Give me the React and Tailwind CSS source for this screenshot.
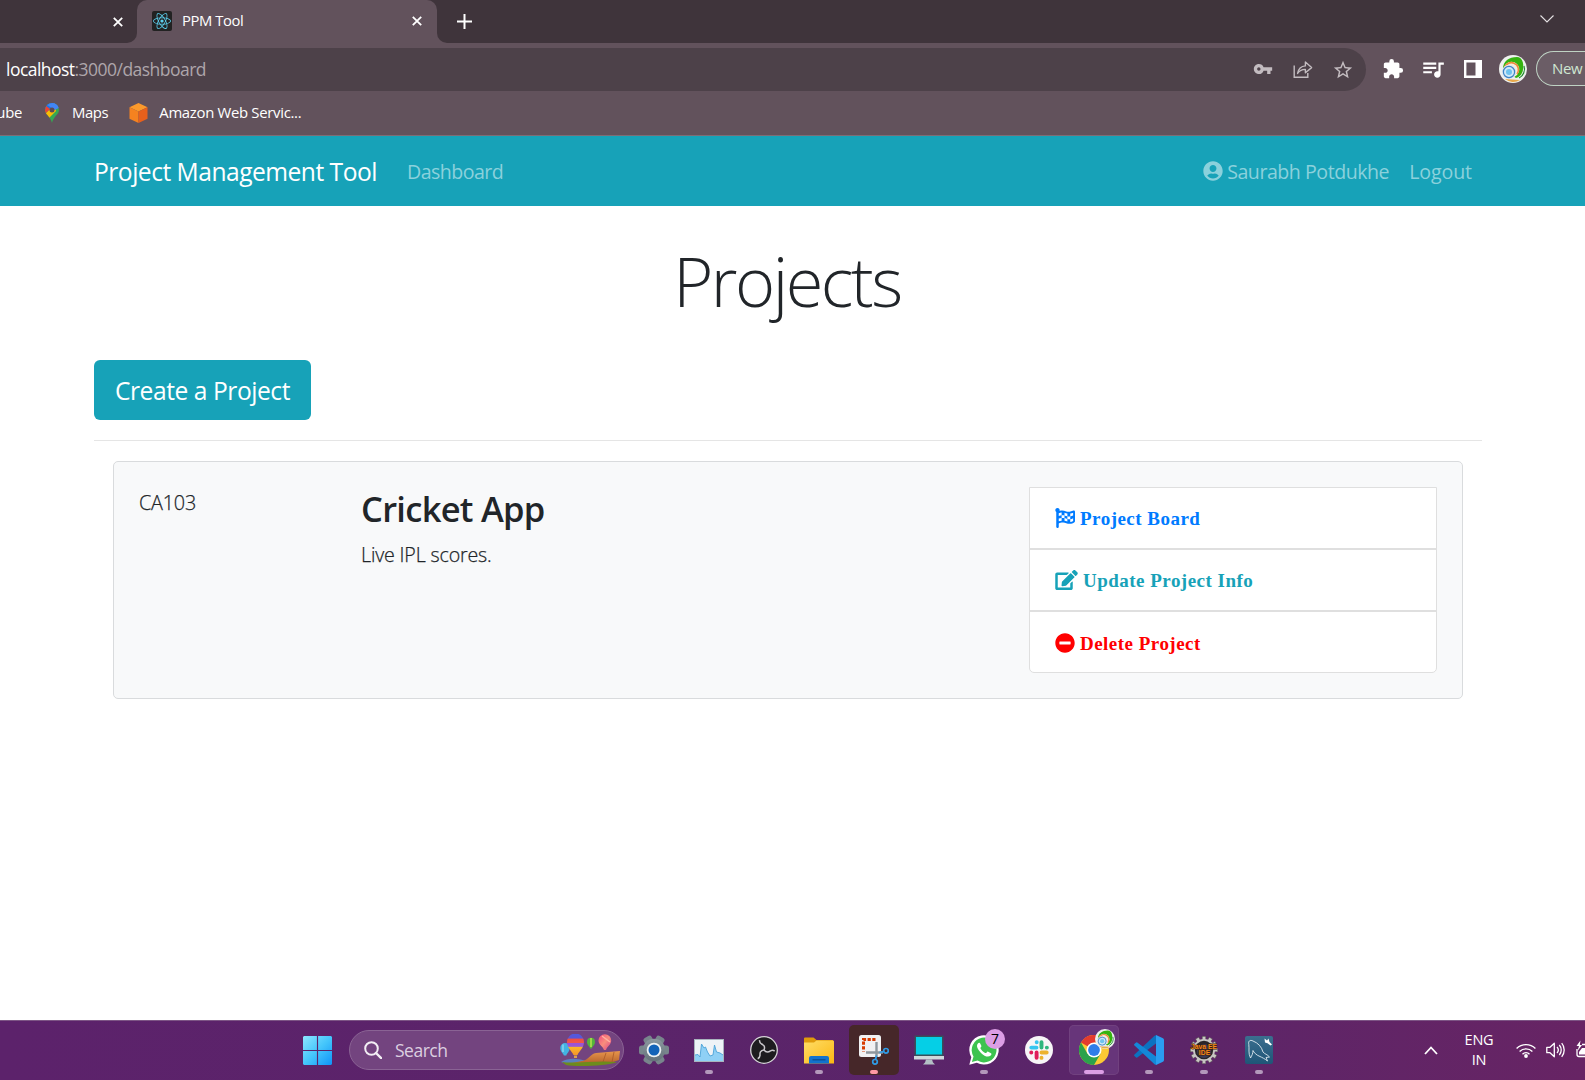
import React from "react";
import { FaUserCircle, FaEdit, FaMinusCircle, FaReact, FaFlagCheckered } from "react-icons/fa";
import { MdVpnKey, MdStarBorder, MdExtension, MdQueueMusic } from "react-icons/md";

const CloseIcon = ({ className }) => (
  <svg viewBox="0 0 10 10" className={className}>
    <path d="M0.8 0.8 9.2 9.2M9.2 0.8 0.8 9.2" stroke="#fff" strokeWidth="1.8" fill="none" />
  </svg>
);

const ShareIcon = () => (
  <svg viewBox="0 0 20 19" className="h-[19px] w-[20px]" fill="none" stroke="#c3bcc0" strokeWidth="1.4">
    <path d="M1.2 5.5V17.3H14.8V13" />
    <path d="M4.6 13.4C5.4 8.8 8.3 6.2 12.4 5.9V2L18.6 7.6 12.4 12.8V9.4C9 9.3 6.6 10.6 4.6 13.4Z" strokeLinejoin="round" />
  </svg>
);

const MapsIcon = () => (
  <svg viewBox="0 0 14 20" className="h-[20px] w-[14px]">
    <defs>
      <clipPath id="pin"><path d="M7 0A7 7 0 0 0 0 7C0 11.5 5.3 13 7 20 8.7 13 14 11.5 14 7A7 7 0 0 0 7 0Z" /></clipPath>
    </defs>
    <g clipPath="url(#pin)">
      <path d="M0 0H14V20H0Z" fill="#34a853" />
      <path d="M0 0H14V4L7 7Z" fill="#4285f4" />
      <path d="M1 2 7 0 9 3 4 9 0 5Z" fill="#1a73e8" />
      <path d="M0 11 9 2 11 8 3 16Z" fill="#fbbc04" />
      <path d="M0 2 5 6 0 11Z" fill="#ea4335" />
      <path d="M7 0H14V5L9.5 7 6 4.6 2.2 2Z" fill="#4285f4" />
    </g>
    <circle cx="7" cy="7" r="2.5" fill="#5d4a53" />
  </svg>
);

const CubeIcon = () => (
  <svg viewBox="0 0 18 20" className="h-[20px] w-[19px]">
    <path d="M9 0 18 4.3 9 8.6 0 4.3Z" fill="#fb9a2c" />
    <path d="M0 4.3 9 8.6V20L0 15.7Z" fill="#f58220" />
    <path d="M18 4.3 9 8.6V20L18 15.7Z" fill="#e8601c" />
  </svg>
);

const Avatar = ({ className }) => (
  <svg viewBox="0 0 28 28" className={className}>
    <circle cx="14" cy="14" r="14" fill="#eef1ee" />
    <path d="M6 24A13 13 0 0 0 21 25Z" fill="#e8a84a" />
    <path d="M4 14C4 6 10 2 18 2 23 2 25 8 24 14 24 18 21 22 17 23Z" fill="#35b310" />
    <path d="M20 23A10 10 0 0 0 25 11" stroke="#1c8a2a" strokeWidth="1.2" fill="none" />
    <circle cx="12.500" cy="14.500" r="7.800" fill="#f4efdf" />
    <path d="M5.500 14A7 7 0 1 1 18 19" stroke="#ef8a3a" strokeWidth="1.600" fill="none" />
    <circle cx="10" cy="17" r="7.200" fill="#dfe4ee" />
    <circle cx="10" cy="17" r="5.600" fill="#cfe9f8" stroke="#3c83c4" strokeWidth="1.200" />
    <circle cx="10" cy="17" r="3" fill="#6fc3ee" />
  </svg>
);

function BrowserChrome() {
  return (
    <header className="flex h-[136px] flex-col border-b border-[#7d6d76] bg-[#62525c] font-['Open_Sans',sans-serif] text-white">
      <div className="flex h-[43px]">
        <div className="flex w-[137px] items-center justify-end rounded-br-[10px] bg-[#3f343b] pr-[14px]">
          <CloseIcon className="size-[10px]" />
        </div>
        <div className="w-[300px] bg-[#3f343b]">
          <div className="flex h-[43px] items-center rounded-t-[10px] bg-[#62525c] pl-[15px] pr-[15px] pb-[1px]">
            <span className="flex size-5 items-center justify-center rounded-[2px] bg-[#222]">
              <FaReact className="size-[18px] text-[#5ccfee]" />
            </span>
            <span className="ml-[10px] flex-1 pb-[1px] text-[14.8px] tracking-[-0.4px]">PPM Tool</span>
            <CloseIcon className="size-[10px]" />
          </div>
        </div>
        <div className="flex flex-1 items-center justify-between rounded-bl-[10px] bg-[#3f343b] pl-[20px] pr-[31px]">
          <svg viewBox="0 0 15 15" className="size-[15px]"><path d="M7.5 0V15M0 7.5H15" stroke="#fff" strokeWidth="2" /></svg>
          <svg viewBox="0 0 14 8" className="mb-[6px] h-[8px] w-[14px]"><path d="M0.5 0.5 7 7 13.5 0.5" stroke="#e6e2e4" strokeWidth="1.1" fill="none" /></svg>
        </div>
      </div>
      <div className="mt-[5px] flex h-[43px] items-center">
        <div className="flex h-full w-[1366px] items-center rounded-r-full bg-[#4d4149] pl-[6px] pr-[12px] text-[#c3bcc0]">
          <span className="flex-1 text-[17.5px] leading-none tracking-[-0.53px] text-[#aea6ab]"><span className="text-white">localhost</span>:3000/dashboard</span>
          <MdVpnKey className="mb-[1px] mr-[20px] size-5" />
          <span className="mr-[19px]"><ShareIcon /></span>
          <MdStarBorder className="size-[22px]" />
        </div>
        <MdExtension className="mb-[2px] ml-[16px] size-[22px]" />
        <MdQueueMusic className="mb-[2px] ml-[16px] size-[26px]" />
        <svg viewBox="0 0 18 18" className="mb-[2px] ml-[18px] size-[18px]">
          <path d="M0 0H18V18H0ZM2.400 2.400V15.600H11.500V2.400Z" fill="#fff" fillRule="evenodd" />
        </svg>
        <Avatar className="mb-[2px] ml-[17px] size-[28px]" />
        <div className="mb-[2px] ml-[9px] h-[35px] flex-1 overflow-hidden rounded-l-full border-[1.5px] border-r-0 border-[#bfd3c4] bg-[#6b5d66] pl-[15px] text-[15px] leading-[32px] tracking-[-0.4px] text-[#cfe6d2]">New</div>
      </div>
      <div className="flex h-[44px] items-center pb-[2px] text-[14.9px] tracking-[-0.31px]">
        <span className="flex w-[22px] justify-end overflow-hidden">ube</span>
        <span className="ml-[23px] pt-[1px]"><MapsIcon /></span>
        <span className="ml-[13px] tracking-[-0.4px]">Maps</span>
        <span className="ml-[21px] pt-[1px]"><CubeIcon /></span>
        <span className="ml-[11px]">Amazon Web Servic...</span>
      </div>
    </header>
  );
}

function Navbar() {
  return (
    <nav className="flex h-[70px] items-center bg-[#17a2b8] pl-[94px] pr-[103px] pt-[2px] font-['Open_Sans',sans-serif] text-[19.6px] text-[#8bd1dc]">
      <span className="text-[24.6px] tracking-[-0.5px] text-white">Project Management Tool</span>
      <span className="ml-[30px] tracking-[-0.53px]">Dashboard</span>
      <span className="ml-auto flex items-center tracking-[-0.47px]"><FaUserCircle className="mb-[2px] mr-[4px] size-5" />Saurabh Potdukhe</span>
      <span className="ml-[20px] mr-[10px] tracking-[-0.1px]">Logout</span>
    </nav>
  );
}

const actions = [
  { label: "Project Board", Icon: FaFlagCheckered, color: "text-[#007bff]", icon: "w-[20px] h-[20px] mr-[5px] mb-[3px]" },
  { label: "Update Project Info", Icon: FaEdit, color: "text-[#17a2b8]", icon: "w-[23px] h-[20px] mr-[5px] mb-[3px]" },
  { label: "Delete Project", Icon: FaMinusCircle, color: "text-[#ff0000]", icon: "w-[20px] h-[20px] mr-[5px] mb-[3px]" },
];

function Dashboard() {
  return (
    <main className="h-[814px] bg-white pl-[94px] pr-[103px] font-['Open_Sans',sans-serif] text-[#212529]">
      <h1 className="pt-[33px] text-center text-[68.5px] font-light leading-[84px] tracking-[-2.5px]"><span className="mr-[2px]">Projects</span></h1>
      <button className="mt-[37px] flex h-[60px] w-[217px] items-center justify-center rounded-[6px] bg-[#17a2b8] pt-[2px] text-[24.6px] tracking-[-0.45px] text-white">Create a Project</button>
      <hr className="mt-[20px] border-t border-[#e5e5e5]" />
      <section className="ml-[19px] mr-[19px] mt-[20px] flex h-[238px] rounded-[5px] border border-[#d9dbdd] bg-[#f8f9fa] p-[25px]">
        <span className="w-[222px] pt-[1px] text-[19.8px] font-light leading-[30px] tracking-[-0.2px] [-webkit-text-stroke:0.25px_#212529]">CA103</span>
        <div className="w-[668px]">
          <h3 className="pt-[1px] text-[34.5px] font-semibold leading-[42px] tracking-[-0.72px]">Cricket App</h3>
          <p className="mt-[10px] text-[19.6px] font-light leading-[30px] tracking-[-0.15px] [-webkit-text-stroke:0.25px_#212529]">Live IPL scores.</p>
        </div>
        <ul className="h-[186px] w-[408px] overflow-hidden rounded-b-[5px] border border-[#dfdfdf] bg-white">
          {actions.map(({ label, Icon, color, icon }) => (
            <li key={label} className={`flex h-[62px] items-center border-b-2 border-[#dfdfdf] pl-[25px] pt-[3px] font-['Liberation_Serif',serif] text-[19px] font-bold tracking-[0.48px] last:border-b-0 last:pt-[2px] ${color}`}>
              <Icon className={icon} />
              {label}
            </li>
          ))}
        </ul>
      </section>
    </main>
  );
}

const WindowsLogo = () => (
  <svg viewBox="0 0 30 30" className="size-[29px]">
    <defs><linearGradient id="win" x1="0" y1="0" x2="1" y2="1"><stop offset="0" stopColor="#8ee6ff" /><stop offset="0.5" stopColor="#45c6fb" /><stop offset="1" stopColor="#0f93f8" /></linearGradient></defs>
    <path d="M1 0H14.4V14.4H0V1ZM15.6 0H29L30 1V14.4H15.6ZM0 15.6H14.4V30H1L0 29ZM15.6 15.6H30V29L29 30H15.6Z" fill="url(#win)" />
  </svg>
);

const Balloons = () => (
  <svg viewBox="0 0 60 32" className="h-[32px] w-[60px]">
    <defs>
      <linearGradient id="b1" x1="0" y1="0" x2="0" y2="1"><stop offset="0" stopColor="#4d5be0" /><stop offset="0.22" stopColor="#5a55d8" /><stop offset="0.25" stopColor="#ef4e43" /><stop offset="0.42" stopColor="#f0564a" /><stop offset="0.45" stopColor="#9b51d8" /><stop offset="0.6" stopColor="#9a5ad2" /><stop offset="0.63" stopColor="#fbb829" /><stop offset="1" stopColor="#f3952b" /></linearGradient>
      <linearGradient id="b2" x1="0" y1="0" x2="1" y2="1"><stop offset="0" stopColor="#f2487f" /><stop offset="0.5" stopColor="#f88e7c" /><stop offset="1" stopColor="#d9438b" /></linearGradient>
      <linearGradient id="hill" x1="0" y1="0" x2="0" y2="1"><stop offset="0" stopColor="#e8964c" /><stop offset="1" stopColor="#b8642c" /></linearGradient>
    </defs>
    <path d="M1 28C8 24 16 24 26 27L40 29H4Z" fill="#5b7fc0" />
    <path d="M22 27C29 26 30 20 36 19L60 17 59 26 50 29H12Z" fill="url(#hill)" />
    <path d="M54 18 52 28M46 19 43 28" stroke="#a8582a" strokeWidth="0.8" />
    <path d="M2 28C16 30 38 26 57 28 48 32 16 33 6 31Z" fill="#6d8b1c" />
    <path d="M0.300 14A4.700 5 0 0 1 9.700 14C9.700 17.500 7 19 6.300 21.500H3.900C3 19 0.300 17.500 0.300 14Z" fill="#43b4e2" />
    <path d="M3 10.500V18" stroke="#9ddcf2" strokeWidth="1.200" />
    <path d="M7 8A8.500 8.500 0 0 1 24 8C24 14 19 17 17.500 21H13.500C12 17 7 14 7 8Z" fill="url(#b1)" />
    <path d="M14 21.500H17V24H14Z" fill="#d9a04c" />
    <path d="M27 8A4 4.200 0 0 1 35 8C35 11 32.500 12 31.800 14.500H30.200C29.500 12 27 11 27 8Z" fill="#54b53a" />
    <path d="M31 4V13" stroke="#b8e34f" strokeWidth="1.500" />
    <path d="M38.500 6.500A6.300 6.300 0 0 1 51.200 6.500C51.200 11 47 12 46 16H44C43 12 38.500 11 38.500 6.500Z" fill="url(#b2)" />
    <path d="M42 2 50 8" stroke="#ffb3a0" strokeWidth="1.500" />
  </svg>
);

const GearIcon = () => (
  <svg viewBox="0 0 30 30" className="size-[30px]">
    <defs><linearGradient id="gear" x1="0" y1="0" x2="0" y2="1"><stop offset="0" stopColor="#8b989f" /><stop offset="1" stopColor="#65727a" /></linearGradient></defs>
    {[0, 60, 120].map((a) => <rect key={a} x="0" y="10.500" width="30" height="9" rx="2.500" transform={`rotate(${a} 15 15)`} fill="#78858c" />)}
    <circle cx="15" cy="15" r="11.200" fill="url(#gear)" />
    <circle cx="15" cy="15" r="7.300" fill="#eef2f4" />
    <circle cx="15" cy="15" r="5.500" fill="#1363b8" />
  </svg>
);

const MonitorChart = () => (
  <svg viewBox="0 0 30 23" className="h-[23px] w-[30px]">
    <rect x="0.500" y="0.500" width="29" height="22" fill="#eef3f7" stroke="#a9b4bd" />
    <path d="M1 16 4 15.500 6 18 7.500 5 10 9 11.500 8 13.500 13 16 17 19 16 20.500 6 22.500 13 26 14 29 16V22H1Z" fill="#8fd0f5" />
    <path d="M1 16 4 15.500 6 18 7.500 5 10 9 11.500 8 13.500 13 16 17 19 16 20.500 6 22.500 13 26 14 29 16" fill="none" stroke="#4ba3d8" strokeWidth="0.900" />
  </svg>
);

const ObsIcon = () => (
  <svg viewBox="0 0 28 28" className="size-[28px]">
    <circle cx="14" cy="14" r="13.300" fill="#1d1c1f" stroke="#d6d4d8" strokeWidth="1.300" />
    {[0, 120, 240].map((a) => (
      <path key={a} transform={`rotate(${a} 14 14)`} d="M14 14C15.500 10.500 13.500 8.800 11.500 8 10 7 9.400 5.800 9.600 4.200" fill="none" stroke="#c9c7cb" strokeWidth="1.500" />
    ))}
  </svg>
);

const FolderIcon = () => (
  <svg viewBox="0 0 30 27" className="h-[27px] w-[30px]">
    <defs><linearGradient id="fold" x1="0" y1="0" x2="1" y2="1"><stop offset="0" stopColor="#ffdd66" /><stop offset="1" stopColor="#fbb813" /></linearGradient></defs>
    <path d="M0 1.500Q0 0.500 1 0.500H9.500L12.500 3H29V8H0Z" fill="#e09b0b" />
    <path d="M0 5.500H10L12.500 3.500H29Q30 3.500 30 4.500V26.500H0Z" fill="url(#fold)" />
    <path d="M5 26.500V21Q5 19 7 19H23Q25 19 25 21V26.500Z" fill="#1273cc" />
    <path d="M8.500 22.800H21.500" stroke="#0b4a8c" strokeWidth="1.200" />
  </svg>
);

const SnipIcon = () => (
  <svg viewBox="0 0 30 30" className="size-[30px]">
    <rect x="0" y="0" width="22" height="22" rx="2.500" fill="#f1f1f3" />
    <path d="M16.500 4.500H4.500V16.500" fill="none" stroke="#d83b01" strokeWidth="3" strokeDasharray="3.200 1.500" />
    <path d="M17.500 7V22M7 17.500H24" stroke="#8e979e" strokeWidth="2.400" />
    <circle cx="27" cy="15.800" r="2.300" fill="none" stroke="#2f9be6" strokeWidth="1.700" />
    <circle cx="16" cy="26.800" r="2.300" fill="none" stroke="#2f9be6" strokeWidth="1.700" />
    <path d="M17.500 20.500 16.500 24.500M20.500 17.500 24.500 16.500" stroke="#2f9be6" strokeWidth="1.800" />
  </svg>
);

const MonitorIcon = () => (
  <svg viewBox="0 0 30 30" className="size-[30px]">
    <path d="M0.500 0.500H29.500V21H0.500Z" fill="#37505b" />
    <path d="M2 2H28V19.500H2Z" fill="#05cfe6" />
    <path d="M0 21H30V24.500H0Z" fill="#cfd8dc" />
    <path d="M12 24.500H18L19 27.500 21 29.500H9L11 27.500Z" fill="#b3bfc5" />
  </svg>
);

const WhatsAppIcon = () => (
  <svg viewBox="0 0 30 30" className="size-[30px]">
    <path d="M0.300 29.700 2.300 22.300A14.700 14.700 0 1 1 7.800 27.700Z" fill="#fff" />
    <path d="M2.900 27.100 4.500 21.500A12.400 12.400 0 1 1 8.600 25.600Z" fill="#3dc34f" />
    <path d="M11.200 8.500C10.600 7.400 9.500 7.900 8.900 8.600 6.800 11.200 8.700 14.500 12 17.900 15.400 21.300 19.300 22.800 21.700 20.500 22.700 19.500 22.600 18.600 22 18.200L19.200 16.700C18.600 16.400 18.200 16.700 17.800 17.200 17.200 18 16.900 18.300 16.100 17.900 14 16.900 12.500 15.300 11.500 13.500 11.100 12.800 11.700 12.400 12.200 11.700 12.500 11.200 12.400 10.900 12.200 10.400Z" fill="#fff" />
  </svg>
);

const SlackIcon = () => (
  <svg viewBox="0 0 28 28" className="size-[28px]">
    <circle cx="14" cy="14" r="14" fill="#f7f5f7" />
    <g strokeWidth="3.900" strokeLinecap="round">
      <path d="M6.300 11.600H11.500M11.700 6.100V6.200" stroke="#36c5f0" />
      <path d="M16.500 6.300V11.500M21.800 11.600H21.900" stroke="#2eb67d" />
      <path d="M21.700 16.500H16.500M16.500 21.800V21.900" stroke="#ecb22e" />
      <path d="M11.600 21.700V16.500M6.200 16.500H6.300" stroke="#e01e5a" />
    </g>
  </svg>
);

const ChromeIcon = () => (
  <svg viewBox="0 0 30 30" className="size-[30px]">
    <circle cx="15" cy="15" r="15" fill="#fcc934" />
    <path d="M15 15 2 7.500A15 15 0 0 1 28 7.500H15Z" fill="#e33b2e" />
    <path d="M2 7.500A15 15 0 0 0 15 30L21.500 18.800 15 15 8.500 18.800Z" fill="#2ba24c" />
    <circle cx="15" cy="15" r="7.500" fill="#fff" />
    <circle cx="15" cy="15" r="5.900" fill="#2f7de9" />
  </svg>
);

const VsCodeIcon = () => (
  <svg viewBox="0 0 30 30" className="size-[30px]">
    <path d="M22.300 0.200V8.200L3.300 22.400Q2.500 23 1.800 22.300L0.400 21Q-0.300 20.200 0.500 19.500L20.500 0.800Q21.500 0 22.300 0.200Z" fill="#0b72c0" />
    <path d="M22.300 29.800V21.800L3.300 7.600Q2.500 7 1.800 7.700L0.400 9Q-0.300 9.800 0.500 10.500L20.500 29.200Q21.500 30 22.300 29.800Z" fill="#1488d8" />
    <path d="M22 0 29 3.200Q30 3.800 30 5V25Q30 26.200 29 26.800L22 30Z" fill="#2a9df0" />
  </svg>
);

const JavaEeIcon = () => (
  <svg viewBox="0 0 28 28" className="size-[28px] overflow-visible">
    {[0, 30, 60, 90, 120, 150].map((a) => <rect key={a} x="0.300" y="12.200" width="27.400" height="3.600" transform={`rotate(${a} 14 14)`} fill="#c9c6c4" stroke="#55504e" strokeWidth="0.500" />)}
    <circle cx="14" cy="14" r="11" fill="#c9c6c4" />
    <circle cx="14" cy="14" r="9.200" fill="#2a2528" />
    <circle cx="14" cy="15" r="7" fill="#3d3c57" />
    <g fontFamily="Liberation Sans" fontWeight="700" fontSize="6.800" fill="#f58a1f" stroke="#3a1c08" strokeWidth="1" paintOrder="stroke" textAnchor="middle">
      <text x="14" y="13.200">Java EE</text>
      <text x="14.500" y="19.300">IDE</text>
    </g>
  </svg>
);

const MySqlIcon = () => (
  <svg viewBox="0 0 28 28" className="size-[28px]">
    <defs><linearGradient id="sql" x1="0" y1="0" x2="0" y2="1"><stop offset="0" stopColor="#3b6f8f" /><stop offset="1" stopColor="#1f5577" /></linearGradient></defs>
    <rect width="28" height="28" rx="2" fill="url(#sql)" />
    <path d="M5.500 22C3 17 4.500 13 3.800 8.500 3 5 5 3.500 8 5 13 7 16.500 10.500 18 16 19.500 18 22.500 18.500 24.500 21L21 21.500 22.500 25C19.500 22.500 17 21.500 15 20.500 11 19 9 16.500 8 14.500 8 17 7 19.500 5.500 22Z" fill="none" stroke="#dfeaf1" strokeWidth="0.900" />
    <path d="M19.500 2.500 22 4.500 23.500 2.500 24.500 6 27 8.500 25.500 9.500 22.500 7.200 20 6.500Z" fill="#fff" />
  </svg>
);

const apps = [
  { id: "settings", Icon: GearIcon },
  { id: "monitor", Icon: MonitorChart, bar: "w-2 bg-[#b398bb]" },
  { id: "obs", Icon: ObsIcon },
  { id: "files", Icon: FolderIcon, bar: "w-2 bg-[#b398bb]" },
  { id: "snip", Icon: SnipIcon, bar: "w-2 bg-[#ff99a4]", cell: "bg-[#462729]" },
  { id: "pc", Icon: MonitorIcon },
  { id: "whatsapp", Icon: WhatsAppIcon, bar: "w-2 bg-[#b398bb]", badge: true },
  { id: "slack", Icon: SlackIcon },
  { id: "chrome", Icon: ChromeIcon, bar: "w-5 bg-[#dc9ee5]", cell: "bg-[#67357a] shadow-[inset_0_0_0_1px_#71417f]", profile: true },
  { id: "vscode", Icon: VsCodeIcon, bar: "w-2 bg-[#b398bb]" },
  { id: "java", Icon: JavaEeIcon, bar: "w-2 bg-[#b398bb]" },
  { id: "mysql", Icon: MySqlIcon, bar: "w-2 bg-[#b398bb]" },
];

function Taskbar() {
  return (
    <footer className="flex h-[60px] items-center overflow-hidden border-t border-[#7d5585] bg-gradient-to-r from-[#5c226b] via-[#5a2569] via-70% to-[#672464] pb-[1px] pl-[292px] font-['Open_Sans',sans-serif] text-white">
      <div className="flex w-[50px] justify-center"><WindowsLogo /></div>
      <div className="ml-[7px] flex h-[40px] w-[275px] shrink-0 items-center rounded-full border border-[#8a6394] bg-[#73447f] pl-[14px] pr-[3px]">
        <svg viewBox="0 0 18 18" className="size-[18px]" fill="none" stroke="#f3eef4" strokeWidth="2"><circle cx="7.500" cy="7.500" r="6.300" /><path d="M12 12 17.300 17.300" strokeWidth="2.400" strokeLinecap="round" /></svg>
        <span className="ml-[13px] flex-1 text-[17.5px] tracking-[-0.5px] text-[#dccfe0]">Search</span>
        <Balloons />
      </div>
      <div className="ml-[5px] flex gap-[5px]">
        {apps.map(({ id, Icon, bar, cell, badge, profile }) => (
          <div key={id} className={`relative flex size-[50px] items-center justify-center rounded-[5px] ${cell || ""}`}>
            <Icon />
            {bar && <span className={`absolute bottom-[1px] h-1 rounded-full ${bar}`} />}
            {badge && <span className="absolute right-[4px] top-[4px] flex size-5 items-center justify-center rounded-full bg-[#dc9ee5] text-[14px] leading-none text-black">7</span>}
            {profile && <span className="absolute right-[4px] top-[4px] flex"><Avatar className="size-[20px]" /></span>}
          </div>
        ))}
      </div>
      <svg viewBox="0 0 14 9" className="ml-[140px] h-[9px] w-[14px] shrink-0"><path d="M1 8 7 1.500 13 8" fill="none" stroke="#fff" strokeWidth="1.800" /></svg>
      <div className="ml-[26px] w-[30px] shrink-0 text-center text-[14.5px] leading-[20px] tracking-[-0.2px]">ENG<br />IN</div>
      <svg viewBox="0 0 20 15" className="ml-[22px] h-[15px] w-[20px] shrink-0" fill="none" stroke="#fff" strokeWidth="1.400">
        <path d="M0.600 5.500A13.300 13.300 0 0 1 19.400 5.500M3.600 8.500A9 9 0 0 1 16.400 8.500M6.500 11.200A5 5 0 0 1 13.500 11.200" />
        <circle cx="10" cy="13" r="1.900" fill="#fff" stroke="none" />
      </svg>
      <svg viewBox="0 0 20 16" className="ml-[10px] h-[16px] w-[20px] shrink-0" fill="none" stroke="#fff" strokeWidth="1.300">
        <path d="M0.800 5.300H4L8.300 1.200V14.800L4 10.700H0.800Z" strokeLinejoin="round" />
        <path d="M11 5A4.500 4.500 0 0 1 11 11M13.300 3A7.500 7.500 0 0 1 13.300 13M15.700 1.200A10.500 10.500 0 0 1 15.700 14.800" />
      </svg>
      <svg viewBox="0 0 9 18" className="mb-[2px] ml-[10px] h-[18px] w-[9px] shrink-0" fill="none" stroke="#fff" strokeWidth="1.300">
        <path d="M9 4.500H6M1 9V14.500Q1 16.500 3 16.500H9" />
        <path d="M4.500 0.500 0.500 6H3L1.500 11 6 5H3.800Z" fill="#fff" stroke="none" />
        <path d="M3 14.500V12L6 8H9V14.500Z" fill="#fff" stroke="none" />
      </svg>
    </footer>
  );
}

export default function App() {
  return (
    <div className="flex h-[1080px] w-[1585px] flex-col overflow-hidden">
      <BrowserChrome />
      <Navbar />
      <Dashboard />
      <Taskbar />
    </div>
  );
}
